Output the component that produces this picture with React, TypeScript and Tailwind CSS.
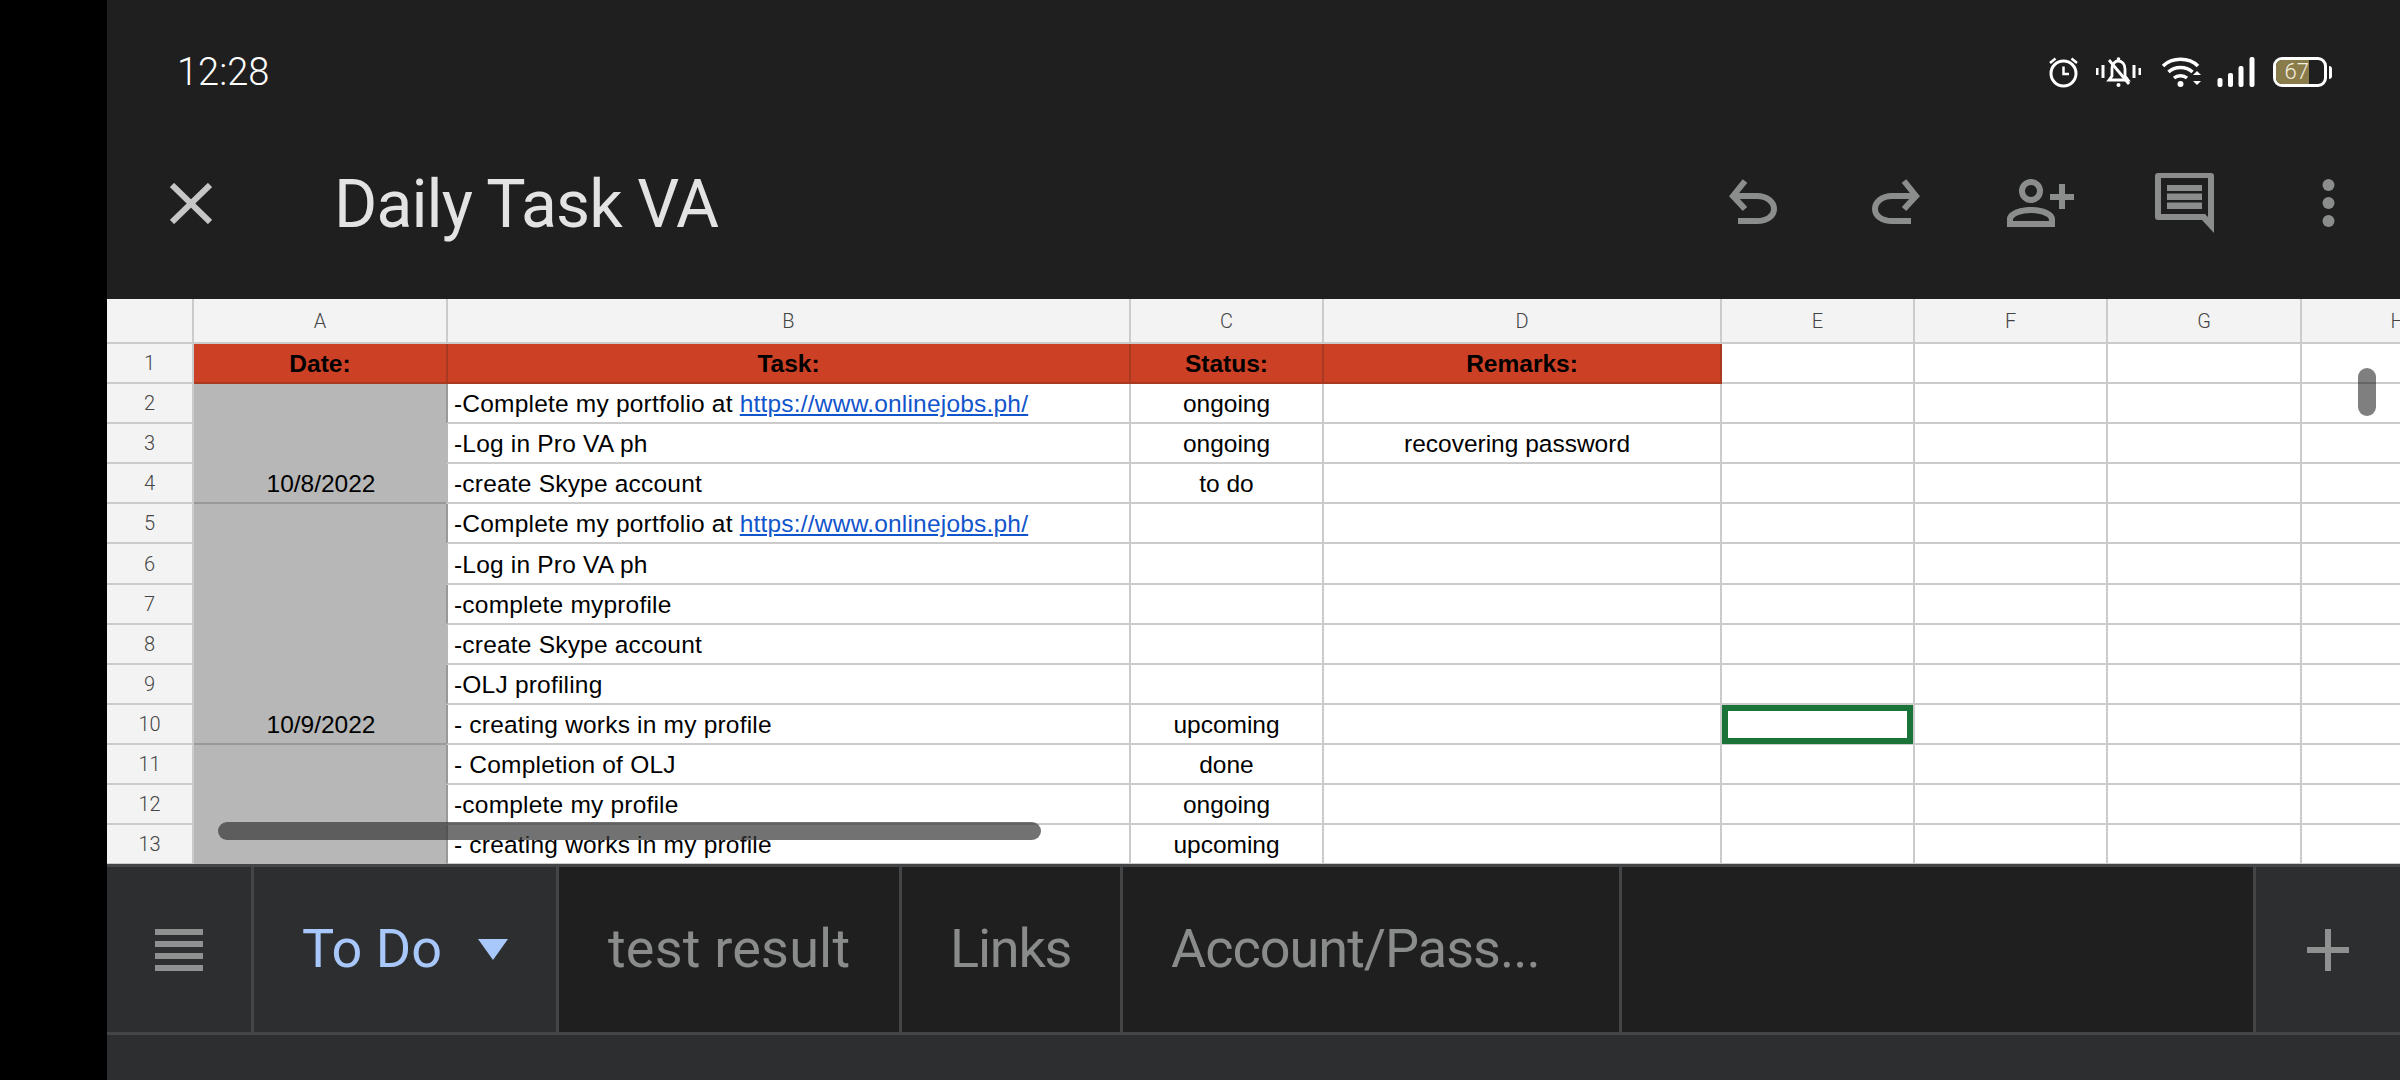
function PortfolioTask() {
  return (
    <>
      -Complete my portfolio at <span className="text-[#1155cc] underline">https://www.onlinejobs.ph/</span>
    </>
  );
}

const taskRows = [
  { n: 2, task: <PortfolioTask />, status: "ongoing", dark: true },
  { n: 3, task: "-Log in Pro VA ph", status: "ongoing", remarks: "recovering password", dark: false },
  { n: 4, task: "-create Skype account", status: "to do", dark: false },
  { n: 5, task: <PortfolioTask />, dark: true },
  { n: 6, task: "-Log in Pro VA ph", dark: false },
  { n: 7, task: "-complete myprofile", dark: true },
  { n: 8, task: "-create Skype account", dark: false },
  { n: 9, task: "-OLJ profiling", dark: true },
  { n: 10, task: "- creating works in my profile", status: "upcoming", dark: true },
  { n: 11, task: "- Completion of OLJ", status: "done", dark: true },
  { n: 12, task: "-complete my profile", status: "ongoing", dark: true },
  { n: 13, task: "- creating works in my profile", status: "upcoming", dark: true },
];

const line = "border-r-2 border-b-2 border-[#cbcbcb]";
const arial = "[font-family:'Liberation_Sans',Arial,sans-serif]";
const headCell = `${line} bg-[#f3f3f3] flex items-center justify-center text-[20px] font-light text-[#444]`;
const redCell = `border-r-2 border-b-2 border-[#a93a22] bg-[#cc4125] flex items-end justify-center pb-[4px] text-[24.5px] leading-[28px] font-bold text-black ${arial}`;
const bodyCell = `${line} bg-white flex items-end overflow-hidden whitespace-nowrap pb-[4px] text-[24.5px] leading-[28px] text-black ${arial}`;
const dateCell = `row-span-3 border-b-2 border-[#999999] bg-[#b7b7b7] flex items-end justify-center pb-[4px] text-[24.5px] leading-[28px] text-black ${arial}`;

function XIcon() {
  return (
    <svg width="42" height="41" viewBox="0 0 42 41" className="shrink-0">
      <path d="M2 2 L40 39 M40 2 L2 39" stroke="#c6c6c6" strokeWidth="6" fill="none" />
    </svg>
  );
}

function UndoIcon({ flip }: { flip?: boolean }) {
  return (
    <svg width="48" height="45" viewBox="0 0 48 45" className={flip ? "-scale-x-100 shrink-0 -mt-[3px]" : "shrink-0 -mt-[3px]"}>
      <path d="M16 2 L4 17 L16 30 M4 17 H28 C38 17 45 23 45 30 C45 37 38 42 28 42 H9" stroke="#8b8c8c" strokeWidth="6" fill="none" />
    </svg>
  );
}

function PersonAddIcon() {
  return (
    <svg width="67" height="48" viewBox="0 0 67 48" className="shrink-0">
      <circle cx="24" cy="12" r="9" stroke="#8b8c8c" strokeWidth="6" fill="none" />
      <path
        fillRule="evenodd"
        fill="#8b8c8c"
        d="M0 48 V40 C0 33 11 28 24 28 C37 28 48 33 48 40 V48 Z M6 42 H42 V41 C42 37 33 34 24 34 C15 34 6 37 6 41 Z"
      />
      <path d="M43 15 H67 V21 H58 V30 H52 V21 H43 Z M52 5 H58 V15 H52 Z" fill="#8b8c8c" />
    </svg>
  );
}

function CommentIcon() {
  return (
    <svg width="59" height="60" viewBox="0 0 59 60" className="shrink-0">
      <path
        fillRule="evenodd"
        fill="#8b8c8c"
        d="M3 0 H56 Q59 0 59 3 V60 L47 47 H3 Q0 47 0 44 V3 Q0 0 3 0 Z M6 5 V41 H50 L53 44 V5 Z"
      />
      <path d="M12 12 H47 V18 H12 Z M12 20.500 H47 V27 H12 Z M12 29.500 H47 V36 H12 Z" fill="#8b8c8c" />
    </svg>
  );
}

function DotsIcon() {
  return (
    <svg width="13" height="48" viewBox="0 0 13 48" className="shrink-0">
      <circle cx="6.500" cy="6" r="6" fill="#8b8c8c" />
      <circle cx="6.500" cy="24" r="6" fill="#8b8c8c" />
      <circle cx="6.500" cy="42" r="6" fill="#8b8c8c" />
    </svg>
  );
}

function AlarmIcon() {
  return (
    <svg width="29" height="31" viewBox="0 0 29 31" className="shrink-0">
      <circle cx="14.500" cy="16.500" r="12.500" stroke="white" strokeWidth="3" fill="none" />
      <path d="M14.500 9.500 V17 H20" stroke="white" strokeWidth="2.500" fill="none" />
      <path d="M1 6 L6.500 1.500 M28 6 L22.500 1.500" stroke="white" strokeWidth="2.500" fill="none" />
    </svg>
  );
}

function BellOffIcon() {
  return (
    <svg width="45" height="30" viewBox="0 0 45 30" className="shrink-0">
      <path d="M1 11 V18 M7 8 V21 M38 8 V21 M44 11 V18" stroke="white" strokeWidth="3" fill="none" />
      <path
        d="M13 23 H32 L29 19 V12 C29 7 26 4 22.500 4 C19 4 16.500 7 16 11 V19 Z"
        stroke="white"
        strokeWidth="2.800"
        fill="none"
      />
      <path d="M13 3 L33 27" stroke="white" strokeWidth="2.800" fill="none" />
      <circle cx="22.500" cy="2" r="1.800" fill="white" />
      <circle cx="22.500" cy="28" r="2" fill="white" />
    </svg>
  );
}

function WifiIcon() {
  return (
    <svg width="40" height="30" viewBox="0 0 40 30" className="shrink-0">
      <path
        d="M1 9 C10 0 27 0 36 9 M6.500 15 C13 9 24 9 30.500 15 M12 21 C15.500 18 21.500 18 25 21"
        stroke="white"
        strokeWidth="3.500"
        fill="none"
      />
      <circle cx="18.500" cy="27" r="3" fill="white" />
      <path d="M31 18 L35 14 L39 18 Z M31 24 L35 28 L39 24 Z" fill="white" />
    </svg>
  );
}

function SignalIcon() {
  return (
    <svg width="38" height="30" viewBox="0 0 38 30" className="shrink-0">
      <rect x="0.500" y="21" width="5" height="9" rx="2" fill="white" />
      <rect x="11" y="16" width="5" height="14" rx="2" fill="white" />
      <rect x="21.500" y="9" width="5" height="21" rx="2" fill="white" />
      <rect x="32.500" y="0" width="5" height="30" rx="2" fill="white" />
    </svg>
  );
}

function Battery() {
  return (
    <div className="flex items-center shrink-0">
      <div className="relative w-[54px] h-[30px] rounded-[9px] border-[3px] border-white overflow-hidden">
        <div className="h-full w-[33px] bg-[#8a7b4a] flex items-center justify-end text-[22px] leading-[24px] font-light text-[#f3efe0]">
          67
        </div>
      </div>
      <div className="ml-[2px] w-[3px] h-[13px] rounded-r-full bg-white" />
    </div>
  );
}

function Tab({ w, children, active }: { w: string; children: React.ReactNode; active?: boolean }) {
  return (
    <div
      className={`${w} h-full shrink-0 border-r-[3px] border-[#444546] flex items-center ${
        active ? "bg-[#2d2e30] text-[#a8c7fa]" : "bg-[#1f1f1f] text-[#8a8b8b]"
      }`}
    >
      {children}
    </div>
  );
}

export default function App() {
  return (
    <div className="w-[2400px] h-[1080px] overflow-hidden bg-black pl-[107px] [font-family:Roboto,sans-serif]">
      <div className="w-[2293px] h-full flex flex-col overflow-hidden">
        {/* status bar + toolbar */}
        <div className="h-[299px] shrink-0 bg-[#1f1f1f]">
          <div className="pt-[57px] flex items-center pl-[70px] pr-[68px] h-[87px]">
            <span className="text-[38px] leading-[30px] font-light text-white">12:28</span>
            <div className="ml-auto flex items-center">
              <AlarmIcon />
              <div className="ml-[18px]">
                <BellOffIcon />
              </div>
              <div className="ml-[21px]">
                <WifiIcon />
              </div>
              <div className="ml-[15px]">
                <SignalIcon />
              </div>
              <div className="ml-[18px]">
                <Battery />
              </div>
            </div>
          </div>
          <div className="mt-[86px] h-[60px] flex items-center pl-[63px] pr-[65px]">
            <XIcon />
            <span className="ml-[122px] text-[66px] leading-[60px] tracking-[-0.9px] mt-[3px] text-[#e3e3e3]">Daily Task VA</span>
            <div className="ml-auto flex items-center">
              <UndoIcon />
              <div className="ml-[95px] flex">
                <UndoIcon flip />
              </div>
              <div className="ml-[87px]">
                <PersonAddIcon />
              </div>
              <div className="ml-[81px]">
                <CommentIcon />
              </div>
              <div className="ml-[108px]">
                <DotsIcon />
              </div>
            </div>
          </div>
        </div>

        {/* sheet */}
        <div className="relative h-[565px] shrink-0 overflow-hidden bg-white">
          <div className="w-[2500px] grid grid-cols-[87px_254px_683px_193px_398px_193px_193px_194px_193px] grid-rows-[45px_repeat(13,40.1px)]">
            <div className={headCell} />
            {["A", "B", "C", "D", "E", "F", "G", "H"].map((c) => (
              <div key={c} className={headCell}>
                {c}
              </div>
            ))}

            <div className={headCell}>1</div>
            <div className={redCell}>Date:</div>
            <div className={redCell}>Task:</div>
            <div className={redCell}>Status:</div>
            <div className={redCell}>Remarks:</div>
            <div className={bodyCell} />
            <div className={bodyCell} />
            <div className={bodyCell} />
            <div className={bodyCell} />

            {taskRows.map((r) => (
              <div key={r.n} className="contents">
                <div className={headCell}>{r.n}</div>
                {r.n === 2 && <div className={dateCell}>10/8/2022</div>}
                {r.n === 5 && <div className={`${dateCell} !row-span-6`}>10/9/2022</div>}
                {r.n === 11 && <div className="row-span-3 bg-[#b7b7b7]" />}
                <div className={`${bodyCell} pl-[6px] tracking-[0.2px] border-l-2 -ml-[2px] ${r.dark ? "border-l-[#999999]" : "border-l-[#b7b7b7]"}`}>
                  <span>{r.task}</span>
                </div>
                <div className={`${bodyCell} justify-center`}>{r.status}</div>
                <div className={`${bodyCell} justify-center`}>
                  <span className="pr-[10px]">{r.remarks}</span>
                </div>
                <div className={bodyCell + (r.n === 10 ? " !pb-0 !overflow-visible" : "")}>
                  {r.n === 10 && <div className="w-full h-[39px] -mb-[1px] border-[6px] border-[#1a7338]" />}
                </div>
                <div className={bodyCell} />
                <div className={bodyCell} />
                <div className={bodyCell} />
              </div>
            ))}
          </div>

          <div className="absolute left-[111px] top-[523px] w-[823px] h-[18px] rounded-full bg-[#363636]/70" />
          <div className="absolute left-[2251px] top-[69px] w-[18px] h-[48px] rounded-full bg-black/50" />
        </div>

        {/* sheet tabs */}
        <div className="h-[3px] shrink-0 bg-[#444546]" />
        <div className="h-[165px] shrink-0 flex text-[54px] leading-[60px]">
          <Tab w="w-[147px]" active>
            <div className="ml-[48px] flex flex-col gap-[6px]">
              <div className="w-[48px] h-[6px] bg-[#8f9090]" />
              <div className="w-[48px] h-[6px] bg-[#8f9090]" />
              <div className="w-[48px] h-[6px] bg-[#8f9090]" />
              <div className="w-[48px] h-[6px] bg-[#8f9090]" />
            </div>
          </Tab>
          <Tab w="w-[305px]" active>
            <span className="ml-[48px] -mt-[2px]">To Do</span>
            <svg width="30" height="21" viewBox="0 0 30 21" className="ml-[36px]">
              <path d="M0 0 H30 L15 21 Z" fill="#a8c7fa" />
            </svg>
          </Tab>
          <Tab w="w-[343px]">
            <span className="ml-[49px] -mt-[2px] tracking-[0.2px]">test result</span>
          </Tab>
          <Tab w="w-[221px]">
            <span className="ml-[48px] -mt-[2px] tracking-[-1.2px]">Links</span>
          </Tab>
          <Tab w="w-[499px]">
            <span className="ml-[48px] -mt-[2px] tracking-[-1px]">Account/Pass...</span>
          </Tab>
          <Tab w="w-[634px]">{null}</Tab>
          <div className="flex-1 bg-[#2d2e30] flex items-center justify-center">
            <svg width="42" height="42" viewBox="0 0 42 42">
              <path d="M18 0 H24 V18 H42 V24 H24 V42 H18 V24 H0 V18 H18 Z" fill="#8f9090" />
            </svg>
          </div>
        </div>
        <div className="h-[3px] shrink-0 bg-[#444546]" />
        <div className="flex-1 bg-[#2d2e30]" />
      </div>
    </div>
  );
}
